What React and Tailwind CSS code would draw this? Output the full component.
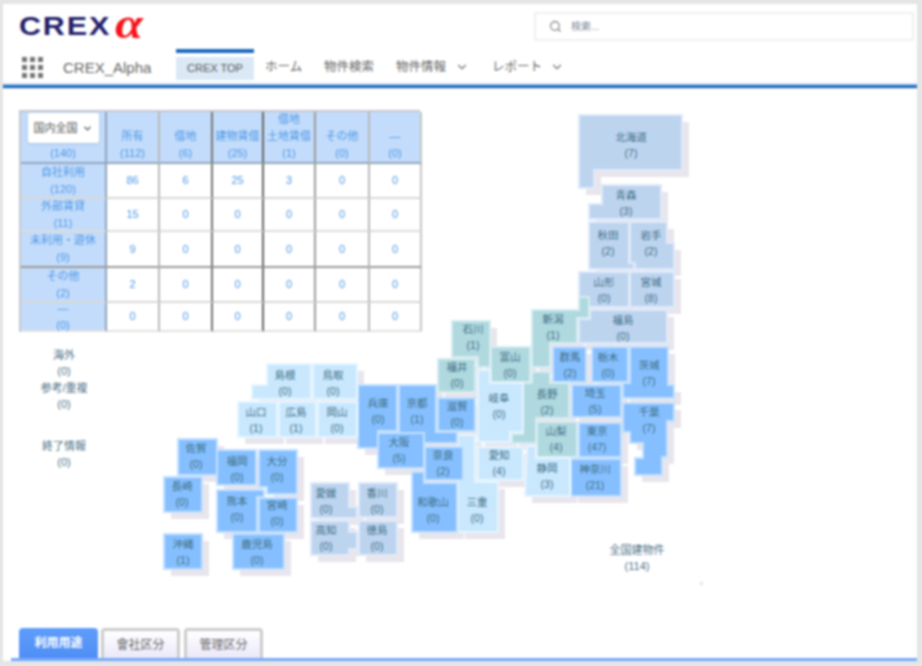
import React from "react";
import { ChevronDown, Search } from "lucide-react";

const BLUE = "fill-[#85bfff] stroke-[#c4e0ff]";
const NAVY = "fill-[#bdd4ef] stroke-[#dfeafa]";
const TEAL = "fill-[#afd8df] stroke-[#d6edf0]";
const PALE = "fill-[#c9e8fe] stroke-[#e6f5ff]";

// points are in page pixels, the svg viewBox takes care of the offset
const PREFS = [
  { name: "北海道", n: 7, x: 631, y: 137, tone: NAVY, pts: "579,115 682,115 682,170 594,170 594,188 579,188" },
  { name: "青森", n: 3, x: 626, y: 195, tone: NAVY, pts: "602,185 661,185 661,219 589,219 589,204 602,204" },
  { name: "秋田", n: 2, x: 608, y: 235, tone: NAVY, pts: "589,222 629,222 629,263 634,263 634,269 589,269" },
  { name: "岩手", n: 2, x: 651, y: 235, tone: NAVY, pts: "630,222 667,222 667,243 674,243 674,269 635,269 635,263 630,263" },
  { name: "山形", n: 0, x: 604, y: 282, tone: NAVY, pts: "579,272 629,272 629,307 589,307 589,297 579,297" },
  { name: "宮城", n: 8, x: 651, y: 282, tone: NAVY, pts: "630,272 674,272 674,307 630,307" },
  { name: "福島", n: 0, x: 623, y: 320, tone: NAVY, pts: "590,310 667,310 667,343 579,343 579,319 590,319" },
  { name: "新潟", n: 1, x: 553, y: 319, tone: TEAL, pts: "532,310 579,310 579,297 589,297 589,318 577,318 577,343 550,343 550,367 532,367" },
  { name: "群馬", n: 2, x: 570, y: 357, tone: BLUE, pts: "553,347 586,347 586,382 553,382" },
  { name: "栃木", n: 0, x: 608, y: 357, tone: BLUE, pts: "592,347 628,347 628,382 592,382" },
  { name: "茨城", n: 7, x: 649, y: 365, tone: BLUE, pts: "630,347 668,347 668,385 674,385 674,398 623,398 623,383 630,383" },
  { name: "埼玉", n: 5, x: 595, y: 393, tone: BLUE, pts: "572,385 621,385 621,417 572,417" },
  { name: "千葉", n: 7, x: 649, y: 412, tone: BLUE, pts: "623,403 674,403 674,421 667,421 667,457 662,457 662,475 635,475 635,458 643,458 643,443 630,443 630,432 623,432" },
  { name: "長野", n: 2, x: 547, y: 394, tone: TEAL, pts: "526,383 532,383 532,372 550,372 550,383 569,383 569,418 536,418 536,443 512,443 512,434 523,434 523,383" },
  { name: "山梨", n: 4, x: 556, y: 431, tone: TEAL, pts: "537,422 577,422 577,457 537,457" },
  { name: "東京", n: 47, x: 597, y: 431, tone: BLUE, pts: "579,423 621,423 621,457 579,457" },
  { name: "神奈川", n: 21, x: 595, y: 469, tone: BLUE, pts: "571,459 621,459 621,496 571,496" },
  { name: "静岡", n: 3, x: 547, y: 468, tone: PALE, pts: "527,446 536,446 536,458 570,458 570,496 525,496" },
  { name: "富山", n: 0, x: 510, y: 357, tone: TEAL, pts: "491,347 530,347 530,382 491,382" },
  { name: "石川", n: 1, x: 473, y: 329, tone: TEAL, pts: "452,321 490,321 490,367 478,367 478,357 452,357" },
  { name: "岐阜", n: 0, x: 499, y: 398, tone: PALE, pts: "478,370 490,370 490,383 523,383 523,432 510,432 510,442 478,442" },
  { name: "福井", n: 0, x: 457, y: 367, tone: TEAL, pts: "438,359 475,359 475,392 438,392" },
  { name: "滋賀", n: 0, x: 457, y: 406, tone: BLUE, pts: "438,398 475,398 475,431 438,431" },
  { name: "愛知", n: 4, x: 499, y: 455, tone: PALE, pts: "478,447 523,447 523,480 478,480" },
  { name: "三重", n: 0, x: 477, y: 502, tone: PALE, pts: "458,435 475,435 475,482 498,482 498,532 458,532" },
  { name: "和歌山", n: 0, x: 433, y: 502, tone: BLUE, pts: "412,472 424,472 424,483 457,483 457,532 412,532" },
  { name: "京都", n: 1, x: 417, y: 403, tone: BLUE, pts: "399,385 436,385 436,432 457,432 457,443 424,443 424,433 399,433" },
  { name: "奈良", n: 2, x: 443, y: 455, tone: BLUE, pts: "425,447 463,447 463,480 425,480" },
  { name: "兵庫", n: 0, x: 378, y: 403, tone: BLUE, pts: "358,385 397,385 397,431 378,431 378,448 358,448" },
  { name: "大阪", n: 5, x: 399, y: 442, tone: BLUE, pts: "378,433 424,433 424,468 378,468" },
  { name: "鳥取", n: 0, x: 333, y: 375, tone: PALE, pts: "313,364 357,364 357,399 313,399" },
  { name: "島根", n: 0, x: 285, y: 375, tone: PALE, pts: "267,364 311,364 311,399 252,399 252,385 267,385" },
  { name: "山口", n: 1, x: 256, y: 412, tone: PALE, pts: "238,402 277,402 277,437 238,437" },
  { name: "広島", n: 1, x: 296, y: 412, tone: PALE, pts: "279,402 316,402 316,437 279,437" },
  { name: "岡山", n: 0, x: 337, y: 412, tone: PALE, pts: "318,402 357,402 357,437 318,437" },
  { name: "佐賀", n: 0, x: 196, y: 448, tone: BLUE, pts: "178,439 217,439 217,475 178,475" },
  { name: "長崎", n: 0, x: 182, y: 486, tone: BLUE, pts: "164,477 202,477 202,512 164,512" },
  { name: "福岡", n: 0, x: 237, y: 461, tone: BLUE, pts: "217,450 256,450 256,485 217,485" },
  { name: "大分", n: 0, x: 277, y: 461, tone: BLUE, pts: "259,450 297,450 297,494 267,494 267,487 259,487" },
  { name: "熊本", n: 0, x: 237, y: 501, tone: BLUE, pts: "217,490 264,490 264,497 257,497 257,532 217,532" },
  { name: "宮崎", n: 0, x: 277, y: 505, tone: BLUE, pts: "259,498 297,498 297,532 259,532" },
  { name: "鹿児島", n: 0, x: 257, y: 544, tone: BLUE, pts: "233,534 284,534 284,569 233,569" },
  { name: "沖縄", n: 1, x: 183, y: 544, tone: BLUE, pts: "164,534 202,534 202,569 164,569" },
  { name: "愛媛", n: 0, x: 326, y: 493, tone: NAVY, pts: "311,483 349,483 349,507 357,507 357,518 311,518" },
  { name: "香川", n: 0, x: 377, y: 493, tone: NAVY, pts: "359,483 397,483 397,517 359,517" },
  { name: "高知", n: 0, x: 326, y: 530, tone: NAVY, pts: "311,521 349,521 349,532 357,532 357,549 349,549 349,555 311,555" },
  { name: "徳島", n: 0, x: 377, y: 530, tone: NAVY, pts: "359,521 397,521 397,555 359,555" },
];

const OUTSIDE = [
  { name: "海外", n: 0, x: 64, y: 355 },
  { name: "参考/重複", n: 0, x: 64, y: 388 },
  { name: "終了情報", n: 0, x: 64, y: 446 },
  { name: "全国建物件", n: 114, x: 637, y: 550 },
];

const COL_BORDERS = [
  "border-r-[#8fa2ba]",
  "border-r-[#b9b9b9]",
  "border-r-[#757575]",
  "border-r-[#666666]",
  "border-r-[#9d9d9d]",
  "border-r-[#b8b8b8]",
  "border-r-[#c4c4c4]",
];
const ROW_BORDERS = [
  "border-b-[#93a5bd]",
  "border-b-[#d8d8d8]",
  "border-b-[#dcdcdc]",
  "border-b-[#9a9a9a]",
  "border-b-[#d8d8d8]",
  "border-b-[#e2e2e2]",
];

const HEAD = [
  [null, "(140)"],
  ["所有", "(112)"],
  ["借地", "(6)"],
  ["建物賃借", "(25)"],
  ["借地", "土地賃借", "(1)"],
  ["その他", "(0)"],
  ["—", "(0)"],
];
const ROWS = [
  { label: "自社利用", total: "(120)", cells: [86, 6, 25, 3, 0, 0] },
  { label: "外部賃貸", total: "(11)", cells: [15, 0, 0, 0, 0, 0] },
  { label: "未利用・遊休", total: "(9)", cells: [9, 0, 0, 0, 0, 0] },
  { label: "その他", total: "(2)", cells: [2, 0, 0, 0, 0, 0] },
  { label: "—", total: "(0)", cells: [0, 0, 0, 0, 0, 0] },
];

const Header = () => (
  <header className="shrink-0 bg-white">
    <div className="flex h-[44px] items-center pl-[16px] pr-[3px]">
      <div className="flex items-center">
        <span className="text-[25px] font-black leading-none tracking-[1.5px] text-[#23206b] scale-x-[1.22] origin-left">
          CREX
        </span>
        <span className="ml-[21px] font-['Liberation_Serif',serif] text-[44px] italic font-bold leading-none text-[#f5141c] scale-x-[1.15] origin-left -mt-[5px]">
          α
        </span>
      </div>
      <div className="ml-auto flex h-[29px] w-[380px] items-center gap-[9px] border-2 border-[#efefef] bg-white pl-[13px]">
        <Search size={13} strokeWidth={2} className="text-[#777777]" />
        <span className="text-[10px] text-[#7f8a99]">検索...</span>
      </div>
    </div>
    <div className="flex h-[37px] items-end border-b-2 border-[#c9dcef]">
      <div className="mb-[5px] ml-[19px] grid w-[21px] grid-cols-3 gap-[3px]">
        {Array.from({ length: 9 }).map((_, i) => (
          <span key={i} className="h-[5px] w-[5px] bg-[#777777]" />
        ))}
      </div>
      <span className="mb-[5px] ml-[20px] w-[113px] text-[15px] leading-[20px] text-[#666666]">CREX_Alpha</span>
      <div className="mb-[3px] flex h-[31px] w-[78px] flex-col">
        <div className="h-[4px] bg-[#1b6ac0]" />
        <div className="mt-[4px] flex flex-1 items-center justify-center bg-[#dbe9f6] text-[11px] text-[#555555]">CREX TOP</div>
      </div>
      <nav className="mb-[6px] ml-[11px] flex items-center text-[12.5px] leading-[20px] text-[#666666]">
        <span className="w-[59px]">ホーム</span>
        <span className="w-[72px]">物件検索</span>
        <span className="w-[59px]">物件情報</span>
        <ChevronDown size={14} className="mr-[23px] text-[#777777]" />
        <span className="w-[58px]">レポート</span>
        <ChevronDown size={14} className="text-[#777777]" />
      </nav>
    </div>
    <div className="h-[3px] bg-[#1b6ac0]" />
    <div className="h-[1px] bg-[#dfe3e8]" />
  </header>
);

const Matrix = () => (
  <div className="grid w-[401px] grid-cols-[86px_53px_53px_51px_52px_54px_52px] grid-rows-[52px_35px_33px_36px_35px_29px] border-t-2 border-l-2 border-[#c4c8ce] text-center text-[11px] leading-[17px] text-[#4d97e6]">
    {HEAD.map((lines, c) => (
      <div
        key={c}
        className={`flex flex-col items-center justify-end border-r-2 border-b-2 bg-[#c3dcfb] ${COL_BORDERS[c]} ${ROW_BORDERS[0]}`}
      >
        {lines[0] === null && (
          <div className="mb-[2px] flex h-[30px] w-[71px] items-center justify-center gap-[4px] rounded-[2px] bg-white text-[#555555] shadow-sm">
            国内全国
            <ChevronDown size={11} strokeWidth={3} />
          </div>
        )}
        {lines.filter(Boolean).map((t, i) => (
          <span key={i}>{t}</span>
        ))}
      </div>
    ))}
    {ROWS.map((row, r) => (
      <React.Fragment key={row.label}>
        <div className={`flex flex-col items-center justify-center border-r-2 border-b-2 bg-[#c3dcfb] ${COL_BORDERS[0]} ${ROW_BORDERS[r + 1]}`}>
          <span>{row.label}</span>
          <span>{row.total}</span>
        </div>
        {row.cells.map((v, c) => (
          <div key={c} className={`flex items-center justify-center border-r-2 border-b-2 bg-white ${COL_BORDERS[c + 1]} ${ROW_BORDERS[r + 1]}`}>
            {v}
          </div>
        ))}
      </React.Fragment>
    ))}
  </div>
);

const JapanMap = () => (
  <svg
    viewBox="3 89 914 539"
    className="absolute inset-0 h-full w-full"
    fontSize="10.5"
    textAnchor="middle"
  >
    <g transform="translate(7 7)" className="fill-[#e8e5ec]">
      {PREFS.map((p) => (
        <polygon key={p.name} points={p.pts} />
      ))}
    </g>
    {PREFS.map((p) => (
      <polygon key={p.name} points={p.pts} strokeWidth="2" className={p.tone} />
    ))}
    {PREFS.map((p) => (
      <g key={p.name} className="fill-[#3f6f86]">
        <text x={p.x} y={p.y + 4}>{p.name}</text>
        <text x={p.x} y={p.y + 20}>({p.n})</text>
      </g>
    ))}
    {OUTSIDE.map((p) => (
      <g key={p.name} fontSize="11" className="fill-[#4f7288]">
        <text x={p.x} y={p.y + 4}>{p.name}</text>
        <text x={p.x} y={p.y + 20}>({p.n})</text>
      </g>
    ))}
    <rect x="700" y="582" width="3" height="3" className="fill-[#e6e6e6]" />
  </svg>
);

const BottomTabs = () => (
  <div className="flex h-[33px] shrink-0 flex-col">
    <div className="ml-[16px] flex h-[30px] items-end gap-[3px]">
      <div className="flex h-[30px] w-[79px] items-center justify-center rounded-t-[4px] bg-gradient-to-b from-[#5f9dfb] to-[#4f8ff5] text-[12px] font-bold text-white">
        利用用途
      </div>
      <div className="flex h-[30px] w-[79px] items-center justify-center rounded-t-[4px] border-x-[3px] border-t-[3px] border-[#cccccc] bg-gradient-to-b from-white to-[#ebe8fa] text-[12px] text-[#666666]">
        會社区分
      </div>
      <div className="ml-[1px] flex h-[30px] w-[79px] items-center justify-center rounded-t-[4px] border-x-[3px] border-t-[3px] border-[#cccccc] bg-gradient-to-b from-white to-[#ebe8fa] text-[12px] text-[#666666]">
        管理区分
      </div>
    </div>
    <div className="ml-[8px] h-[3px] bg-[#78a8ff]" />
  </div>
);

const App = () => {
  return (
    <div className="h-[666px] w-[922px] overflow-hidden bg-[#e5e5e5] pt-[4px] pr-[5px] pb-[5px] pl-[3px] font-['Liberation_Sans','Noto_Sans_CJK_JP',sans-serif]">
      <div className="flex h-full flex-col bg-white blur-[0.8px]">
        <Header />
        <main className="relative min-h-0 flex-1 pt-[21px] pl-[16px]">
          <JapanMap />
          <div className="relative">
            <Matrix />
          </div>
        </main>
        <BottomTabs />
      </div>
    </div>
  );
};

export default App;
